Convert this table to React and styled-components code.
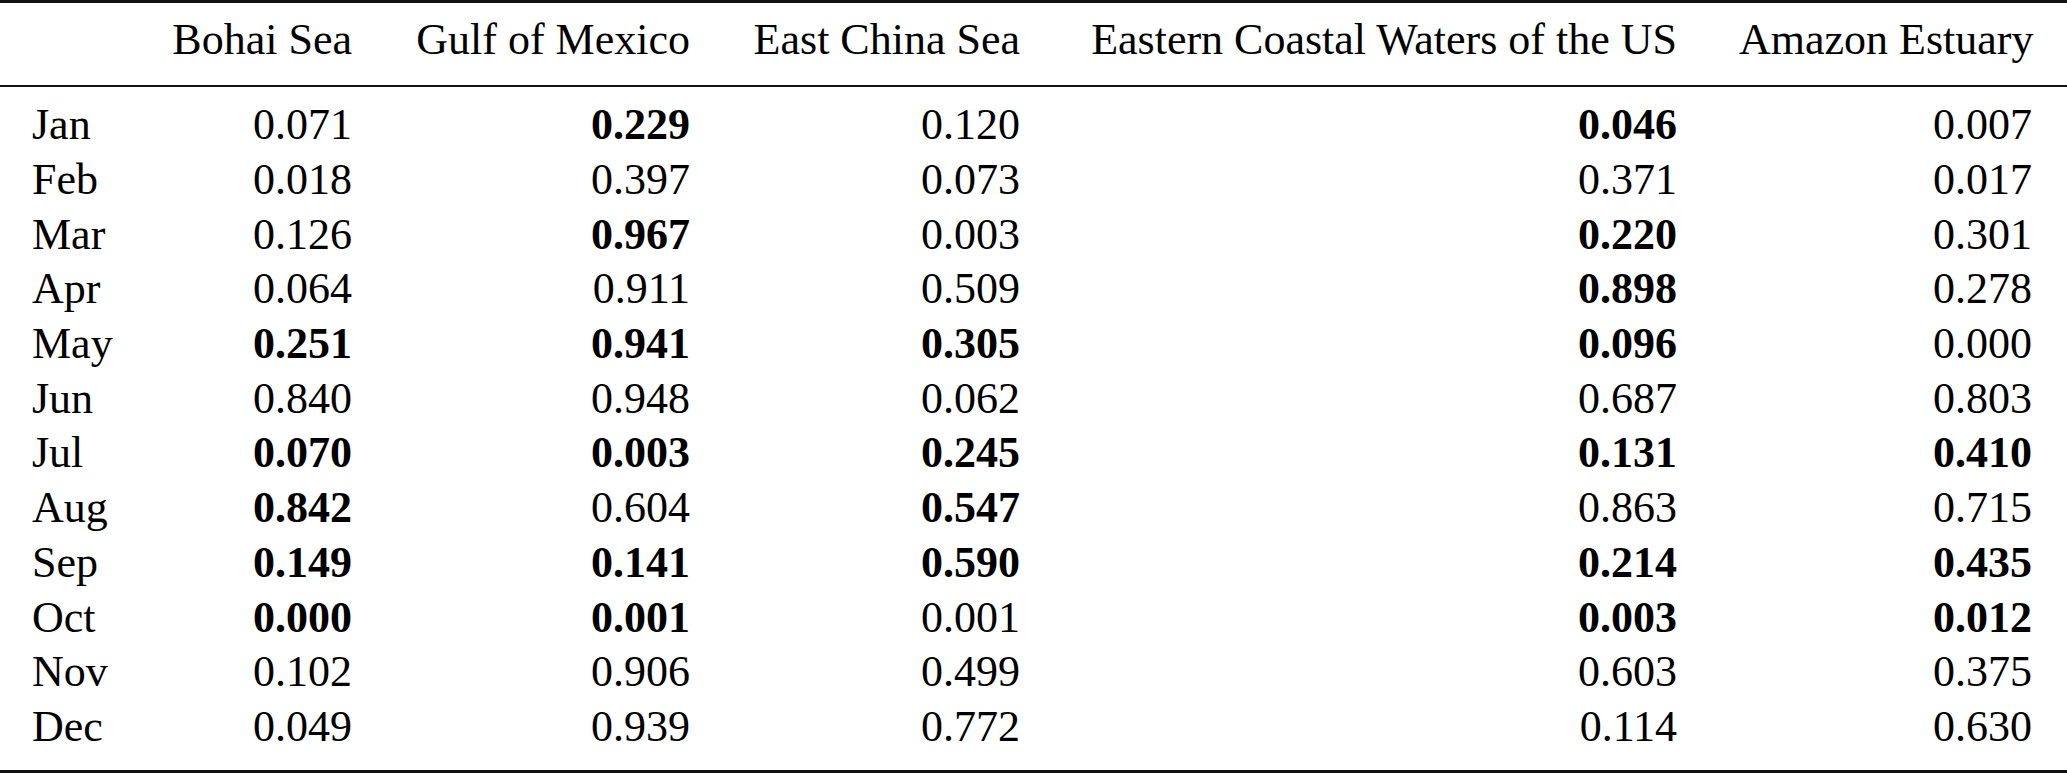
import React from "react";
import styled, { createGlobalStyle } from "styled-components";

const serif = `Tinos, Times, "Times New Roman", "Liberation Serif", serif`;

const GlobalStyle = createGlobalStyle`
  html, body {
    margin: 0;
    padding: 0;
    background: #fff;
  }
  body {
    font-family: ${serif};
    color: #000;
  }
`;

const Table = styled.table`
  width: 2067px;
  table-layout: fixed;
  border-collapse: collapse;
  border-top: 3px solid #111;
  border-bottom: 3px solid #111;
  font-family: ${serif};
  font-size: 44px;
  color: #000;
`;

const HeadRow = styled.tr`
  border-bottom: 2px solid #111;
`;

const HeadCell = styled.th`
  font-family: ${serif};
  font-weight: 400;
  text-align: right;
  line-height: 54.7px;
  padding: 10px 31px 17.5px 31px;
  white-space: nowrap;
  &:first-child {
    padding-left: 32px;
    text-align: left;
  }
  &:last-child {
    padding-right: 35px;
  }
`;

const BodyRow = styled.tr`
  &:first-child td {
    padding-top: 11px;
  }
  &:last-child td {
    padding-bottom: 15.5px;
  }
`;

const Month = styled.td`
  font-family: ${serif};
  text-align: left;
  line-height: 54.7px;
  padding: 0 0 0 32px;
  white-space: nowrap;
`;

const Value = styled.td`
  font-family: ${serif};
  text-align: right;
  line-height: 54.7px;
  padding: 0 31px 0 0;
  font-weight: ${(p) => (p.$bold ? 700 : 400)};
  white-space: nowrap;
  &:last-child {
    padding-right: 35px;
  }
`;

const columns = [
  { name: "", width: 141 },
  { name: "Bohai Sea", width: 242 },
  { name: "Gulf of Mexico", width: 338 },
  { name: "East China Sea", width: 330 },
  { name: "Eastern Coastal Waters of the US", width: 657 },
  { name: "Amazon Estuary", width: 359 },
];

// "*" marks a bold value
const rows = [
  ["Jan", "0.071", "*0.229", "0.120", "*0.046", "0.007"],
  ["Feb", "0.018", "0.397", "0.073", "0.371", "0.017"],
  ["Mar", "0.126", "*0.967", "0.003", "*0.220", "0.301"],
  ["Apr", "0.064", "0.911", "0.509", "*0.898", "0.278"],
  ["May", "*0.251", "*0.941", "*0.305", "*0.096", "0.000"],
  ["Jun", "0.840", "0.948", "0.062", "0.687", "0.803"],
  ["Jul", "*0.070", "*0.003", "*0.245", "*0.131", "*0.410"],
  ["Aug", "*0.842", "0.604", "*0.547", "0.863", "0.715"],
  ["Sep", "*0.149", "*0.141", "*0.590", "*0.214", "*0.435"],
  ["Oct", "*0.000", "*0.001", "0.001", "*0.003", "*0.012"],
  ["Nov", "0.102", "0.906", "0.499", "0.603", "0.375"],
  ["Dec", "0.049", "0.939", "0.772", "0.114", "0.630"],
];

function App() {
  return (
    <>
      <GlobalStyle />
      <Table>
        <colgroup>
          {columns.map((c, idx) => (
            <col key={idx} style={{ width: c.width + "px" }} />
          ))}
        </colgroup>
        <thead>
          <HeadRow>
            {columns.map((c, idx) => (
              <HeadCell key={idx}>{c.name}</HeadCell>
            ))}
          </HeadRow>
        </thead>
        <tbody>
          {rows.map((r) => (
            <BodyRow key={r[0]}>
              <Month>{r[0]}</Month>
              {r.slice(1).map((v, idx) => {
                const bold = v.startsWith("*");
                return (
                  <Value key={idx} $bold={bold}>
                    {bold ? v.slice(1) : v}
                  </Value>
                );
              })}
            </BodyRow>
          ))}
        </tbody>
      </Table>
    </>
  );
}

export default App;
